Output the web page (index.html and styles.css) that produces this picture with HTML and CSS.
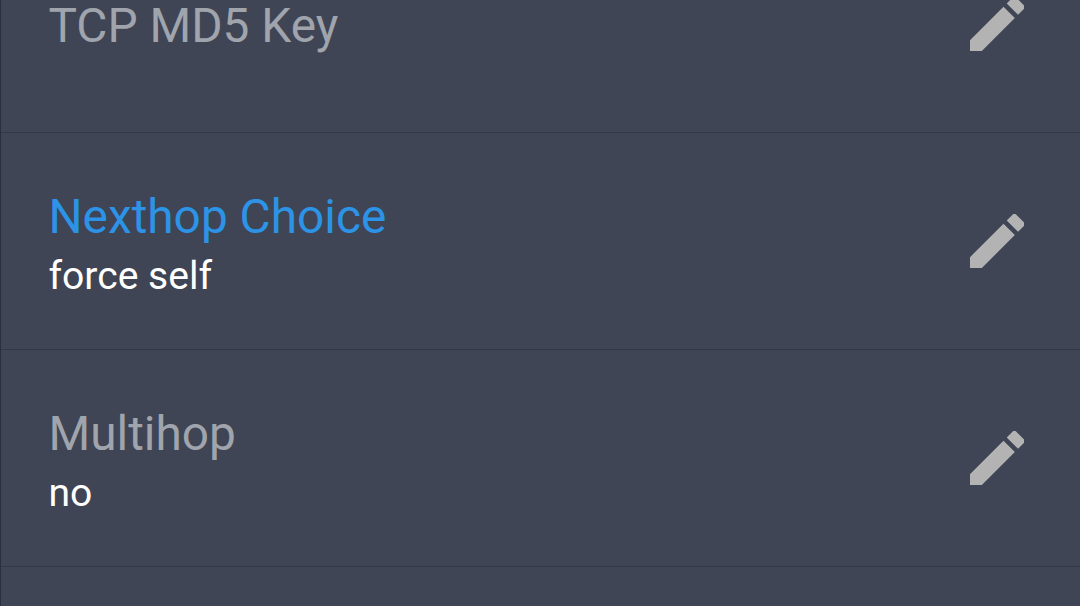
FILE: index.html
```html
<!DOCTYPE html>
<html lang="en">
<head>
    <meta charset="UTF-8">
    <meta name="viewport" content="width=device-width, initial-scale=1.0">
    <title>Peer Settings</title>
    <link rel="stylesheet" href="styles.css">
</head>
<body>
    <svg class="icon-defs" aria-hidden="true">
        <symbol id="pencil" viewBox="3 3 18 18">
            <path d="M3 17.25V21h3.75L17.81 9.94l-3.75-3.75L3 17.25zM20.71 7.04c.39-.39.39-1.02 0-1.41l-2.34-2.34a.996.996 0 0 0-1.41 0l-1.83 1.83 3.75 3.75 1.83-1.83z"/>
        </symbol>
    </svg>
    <div class="settings">
        <div class="row">
            <div class="row-text">
                <div class="label">TCP MD5 Key</div>
            </div>
            <svg class="edit"><use href="#pencil"/></svg>
        </div>
        <div class="row">
            <div class="row-text">
                <div class="label active">Nexthop Choice</div>
                <div class="value">force self</div>
            </div>
            <svg class="edit"><use href="#pencil"/></svg>
        </div>
        <div class="row">
            <div class="row-text">
                <div class="label">Multihop</div>
                <div class="value">no</div>
            </div>
            <svg class="edit"><use href="#pencil"/></svg>
        </div>
    </div>
</body>
</html>
```
FILE: styles.css
```css
body {
    margin: 0;
    height: 606px;
    box-sizing: border-box;
    overflow: hidden;
    display: flex;
    flex-direction: column;
    justify-content: flex-start;
    background-color: #3f4554;
    border-left: 1px solid #2a2f3c;
    font-family: Roboto, sans-serif;
}
.icon-defs {
    display: none;
}
/* the list is scrolled, so the first row is cut by the top edge */
.settings {
    margin-top: -84px;
}
.row {
    display: flex;
    align-items: center;
    justify-content: space-between;
    box-sizing: border-box;
    height: 217px;
    padding: 0 56px 0 47.5px;
    border-bottom: 1px solid #333846;
}
.row-text {
    padding-top: 3px;
}
.label {
    font-size: 47.8px;
    line-height: 62px;
    color: #a0a4ad;
}
.label.active {
    color: #2c93e6;
}
.value {
    height: 51px;
    font-size: 39.1px;
    line-height: 57px;
    color: #fff;
}
.edit {
    width: 54.5px;
    height: 54.5px;
    margin-bottom: 0.5px;
    fill: #b3b3b3;
}
```
